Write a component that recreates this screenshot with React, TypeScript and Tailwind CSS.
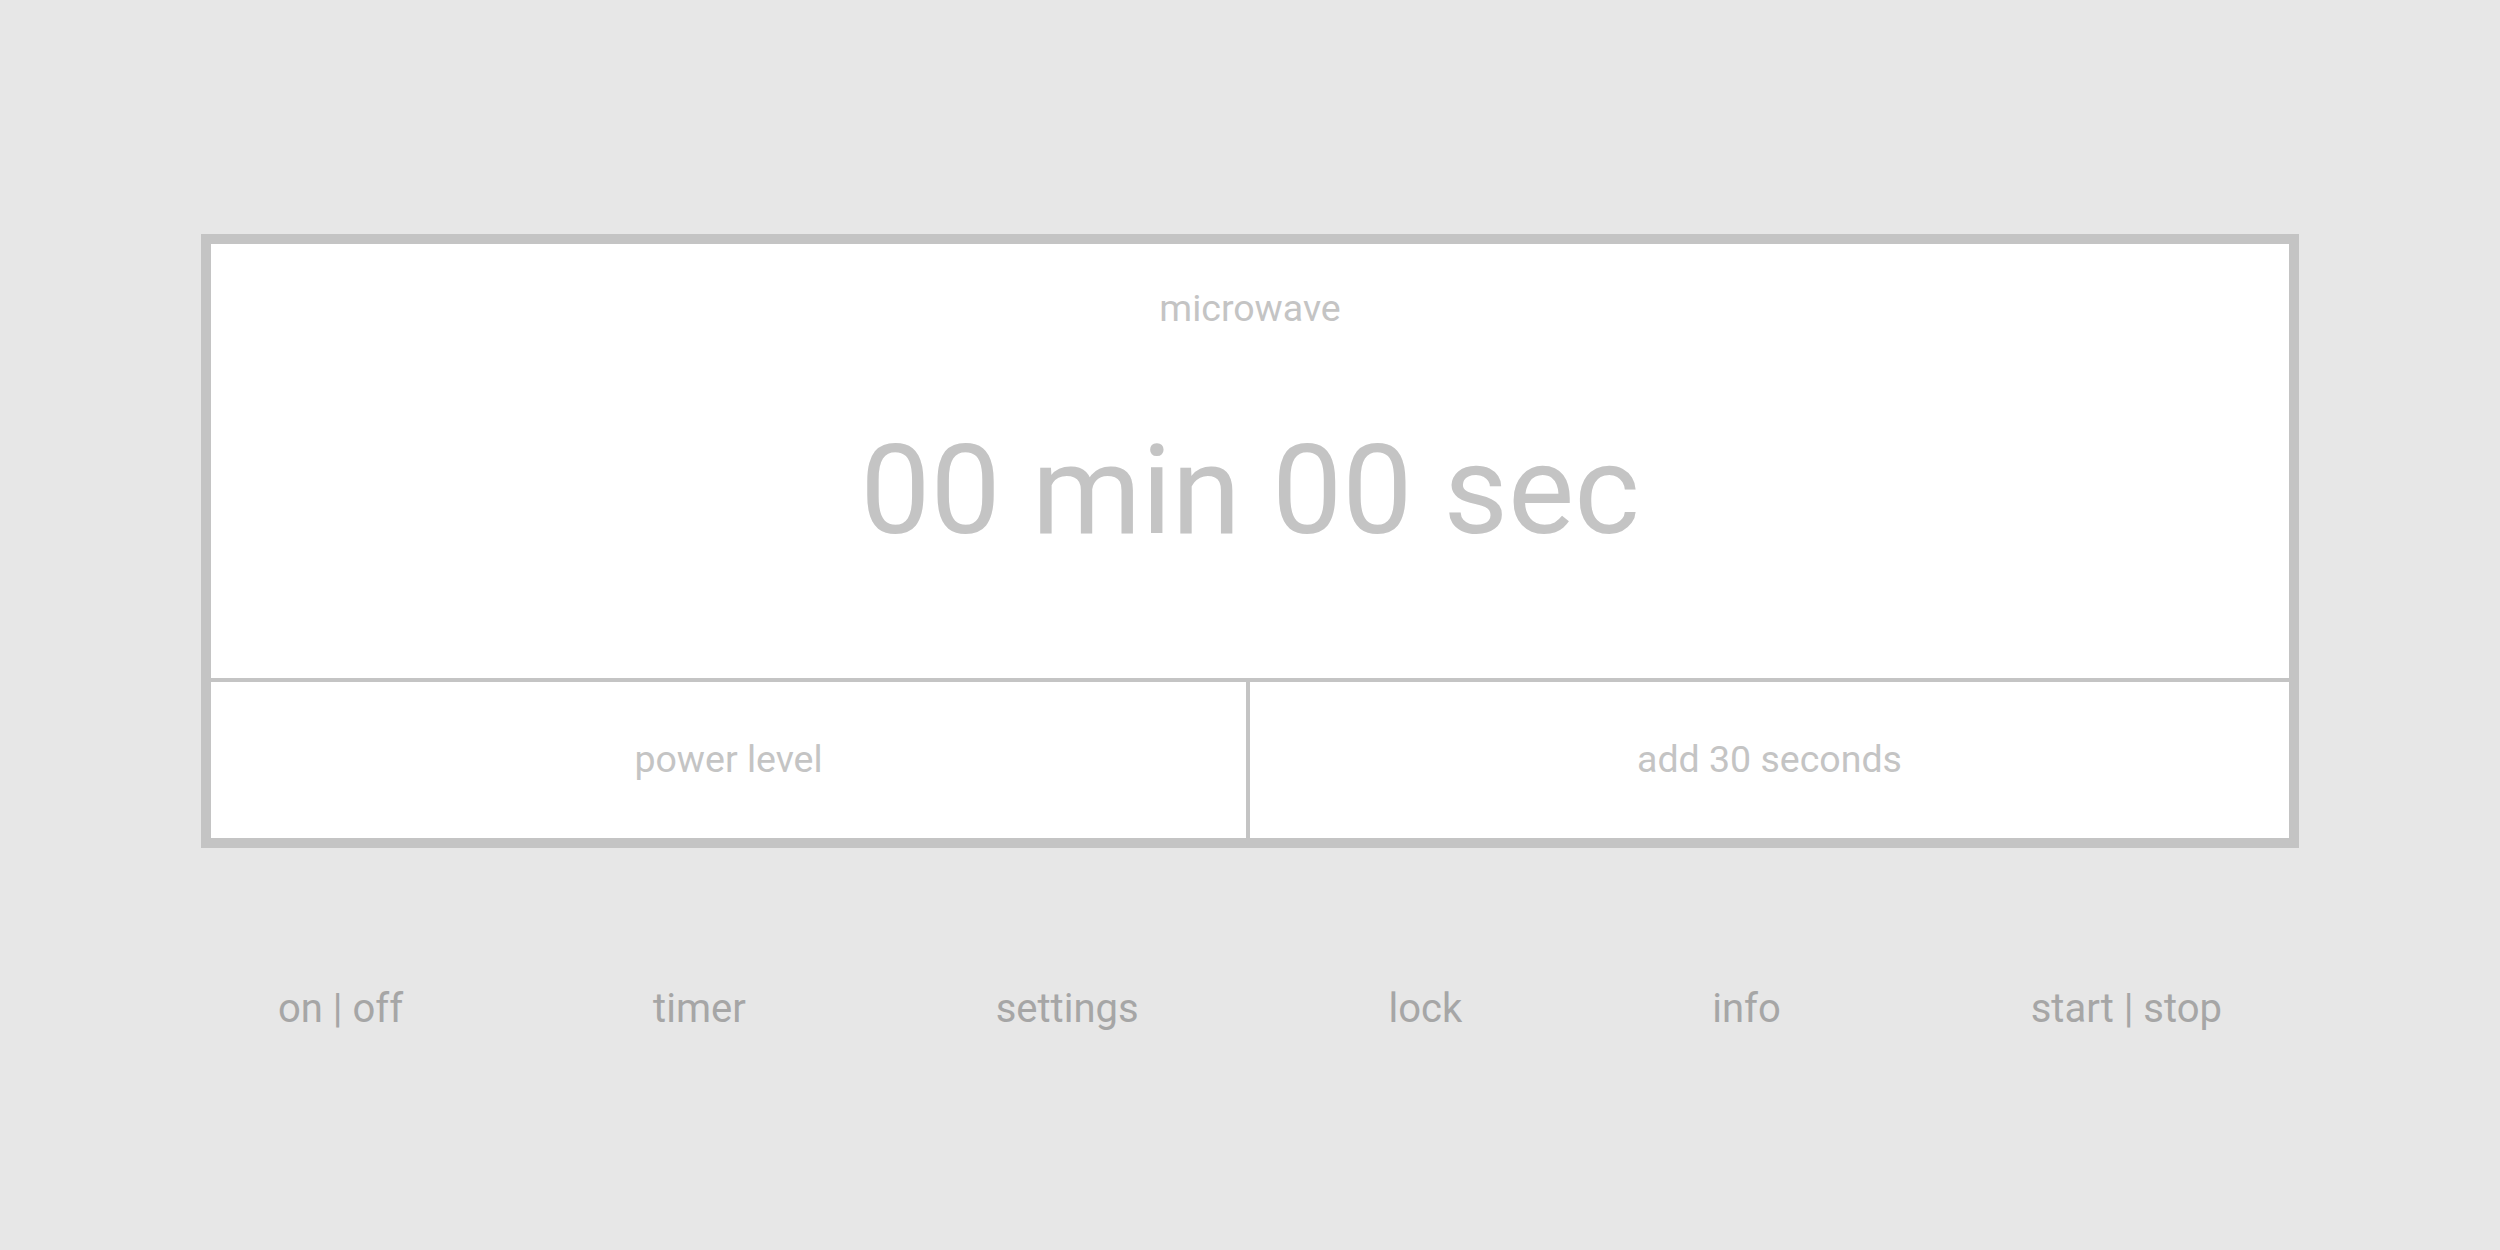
import React from 'react';

const controls = ['on | off', 'timer', 'settings', 'lock', 'info', 'start | stop'];

export default function App() {
  return (
    <div className="min-h-[1250px] w-full bg-[#e7e7e7] pt-[234px] font-['Roboto',sans-serif]">
      <div className="mx-auto w-[2098px]">
        {/* display */}
        <div className="flex h-[614px] flex-col border-[10px] border-[#c4c4c4] bg-white text-[#c4c4c4]">
          <div className="flex h-[434px] flex-col items-center">
            <div className="mt-[46px] text-[37.5px] leading-none">microwave</div>
            <div className="mt-[100px] text-[125px] leading-none">00 min 00 sec</div>
          </div>
          <div className="grid flex-1 grid-cols-2 border-t-4 border-[#c4c4c4]">
            <button className="flex items-center justify-center border-r-4 border-[#c4c4c4] text-[37.5px] leading-none">
              power level
            </button>
            <button className="flex items-center justify-center text-[37.5px] leading-none">
              add 30 seconds
            </button>
          </div>
        </div>

        {/* control buttons */}
        <div className="mt-[141px] flex justify-between px-[77px] text-[40px] leading-none text-[#a6a6a6]">
          {controls.map((c) => (
            <button key={c}>{c}</button>
          ))}
        </div>
      </div>
    </div>
  );
}
